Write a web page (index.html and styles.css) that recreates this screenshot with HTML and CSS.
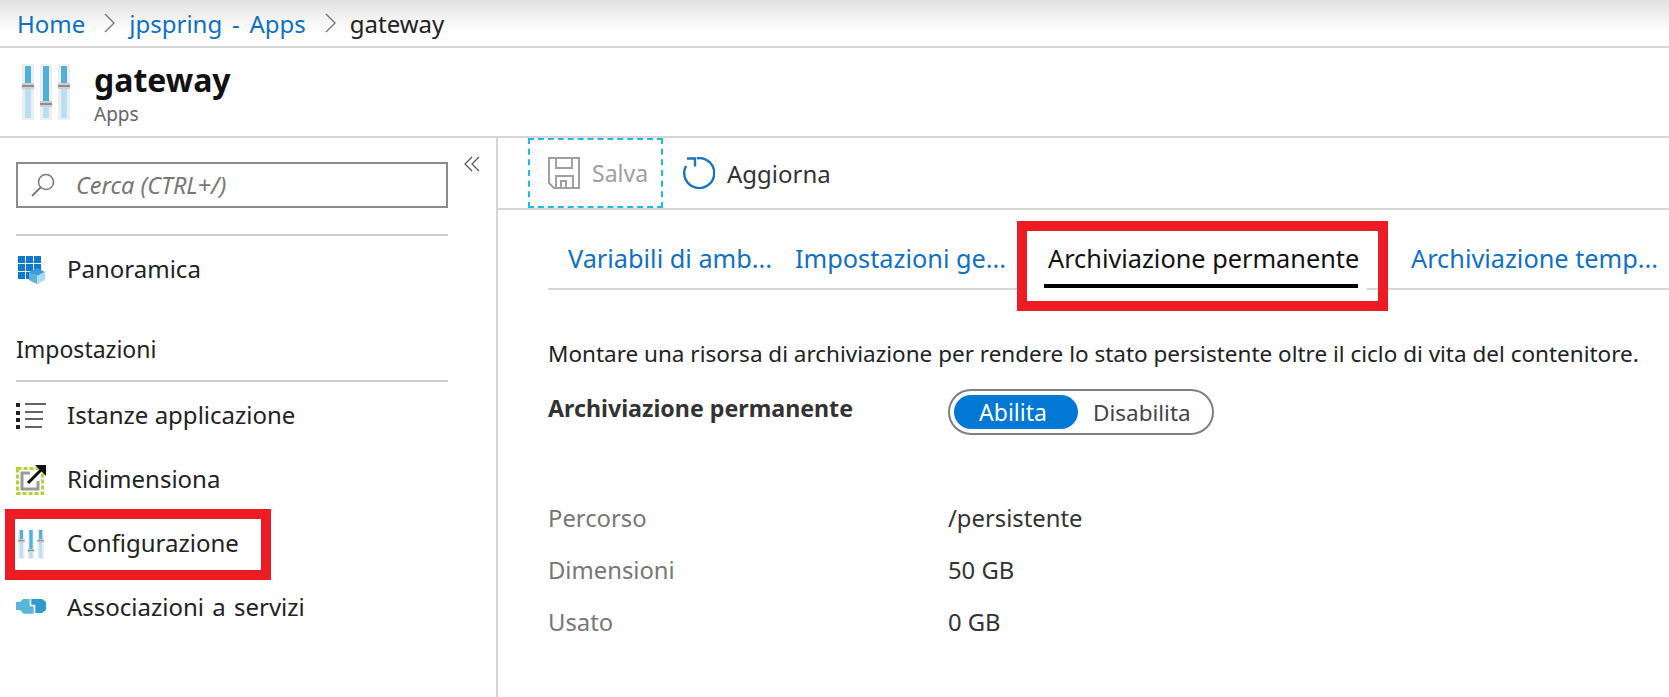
FILE: index.html
```html
<!DOCTYPE html>
<html lang="it">
<head>
  <meta charset="UTF-8">
  <title>gateway - Configurazione</title>
  <link rel="stylesheet" href="styles.css">
</head>
<body>

  <svg class="defs" width="0" height="0">
    <symbol id="sliders" viewBox="0 0 48 56">
      <rect x="0" y="0" width="12" height="56" fill="#eeeeee"/>
      <rect x="18" y="0" width="12" height="56" fill="#eeeeee"/>
      <rect x="36" y="0" width="12" height="56" fill="#eeeeee"/>
      <rect x="3" y="2" width="6" height="52" fill="#b9e0f2"/>
      <rect x="21" y="2" width="6" height="52" fill="#b9e0f2"/>
      <rect x="39" y="2" width="6" height="52" fill="#b9e0f2"/>
      <rect x="3" y="2" width="6" height="18" fill="#4fb0dc"/>
      <rect x="21" y="2" width="6" height="36" fill="#4fb0dc"/>
      <rect x="39" y="2" width="6" height="18" fill="#4fb0dc"/>
      <rect x="0" y="19" width="12" height="6" fill="#cfcfcf"/>
      <rect x="18" y="37" width="12" height="6" fill="#cfcfcf"/>
      <rect x="36" y="19" width="12" height="6" fill="#cfcfcf"/>
      <rect x="0" y="21" width="12" height="2" fill="#8c8c8c"/>
      <rect x="18" y="39" width="12" height="2" fill="#8c8c8c"/>
      <rect x="36" y="21" width="12" height="2" fill="#8c8c8c"/>
    </symbol>
  </svg>

  <nav class="breadcrumb">
    <a href="#">Home</a>
    <svg class="crumb-sep" width="12" height="20" viewBox="0 0 12 20"><path d="M1 1l9 9-9 9" fill="none" stroke="#777" stroke-width="1.4"/></svg>
    <a href="#" class="crumb-wide">jpspring - Apps</a>
    <svg class="crumb-sep" width="12" height="20" viewBox="0 0 12 20"><path d="M1 1l9 9-9 9" fill="none" stroke="#777" stroke-width="1.4"/></svg>
    <span>gateway</span>
  </nav>

  <header class="page-header">
    <svg class="header-icon" width="48" height="56"><use href="#sliders"/></svg>
    <div class="header-text">
      <h1>gateway</h1>
      <div class="subtitle">Apps</div>
    </div>
  </header>

  <div class="layout">
    <aside class="sidebar">
      <div class="search-row">
        <div class="search">
          <svg width="26" height="26" viewBox="0 0 26 26"><circle cx="16" cy="10" r="7.5" fill="none" stroke="#777" stroke-width="1.5"/><path d="M10.5 15.5L2 24" fill="none" stroke="#777" stroke-width="1.8"/></svg>
          <span>Cerca (CTRL+/)</span>
        </div>
        <svg class="collapse" width="16" height="16" viewBox="0 0 16 16"><path d="M8 1L1 8l7 7M15 1L8 8l7 7" fill="none" stroke="#555" stroke-width="1.2"/></svg>
      </div>

      <ul class="menu menu-top">
        <li>
          <svg class="menu-icon" width="30" height="30" viewBox="0 0 30 30">
            <path d="M2 1h7v7H2zM10 1h7v7h-7zM18 1h7v7h-7zM2 9h7v7H2zM10 9h7v7h-7zM18 9h7v7h-7zM2 17h7v7H2zM10 17h7v7h-7z" fill="#0f78d0"/>
            <path d="M21 13l8 4-8 4-8-4z" fill="#3f9bd8"/>
            <path d="M13 17l8 4v8l-8-4z" fill="#59b4d9"/>
            <path d="M29 17l-8 4v8l8-4z" fill="#a9dbf1"/>
          </svg>
          Panoramica
        </li>
      </ul>

      <h2 class="menu-title">Impostazioni</h2>

      <ul class="menu">
        <li>
          <svg class="menu-icon" width="30" height="30" viewBox="0 0 30 30">
            <path d="M0 2h4v4H0zM0 10h4v4H0zM0 17h4v4H0zM0 24h4v4H0z" fill="#222"/>
            <path d="M9 3h21M9 11h18M9 18h18M9 26h17" stroke="#333" stroke-width="1.5" fill="none"/>
          </svg>
          Istanze applicazione
        </li>
        <li>
          <svg class="menu-icon" width="30" height="30" viewBox="0 0 30 30">
            <rect x="1.5" y="3.5" width="25" height="25" fill="none" stroke="#b4d234" stroke-width="3" stroke-dasharray="4 2"/>
            <path d="M14 8H6v16h16v-8" fill="none" stroke="#9a9a9a" stroke-width="3"/>
            <path d="M12 18L27 3" stroke="#111" stroke-width="3"/>
            <path d="M19 0h11v11z" fill="#111"/>
          </svg>
          Ridimensiona
        </li>
        <li class="marked">
          <svg class="menu-icon" width="27" height="30"><use href="#sliders"/></svg>
          Configurazione
          <span class="red-box red-box-menu"></span>
        </li>
        <li class="wide-words">
          <svg class="menu-icon" width="30" height="30" viewBox="0 -5 30 30">
            <path d="M0 4h4l3-3h6.7v7.3h4v7.4H7.7L4 12H0z" fill="#59b4d9"/>
            <path d="M15.3 1H26l4 3v8l-4 3h-6.7V6.7h-4z" fill="#3299cc"/>
          </svg>
          Associazioni a servizi
        </li>
      </ul>
    </aside>

    <main class="content">
      <div class="toolbar">
        <button class="tool tool-save">
          <svg width="32" height="32" viewBox="0 0 32 32"><path d="M1 1h30v30H6l-5-5z M8 1v10h16V1 M8 31V19h17v12 M13 31v-7h5v7" fill="none" stroke="#a0a0a0" stroke-width="2"/></svg>
          Salva
        </button>
        <button class="tool">
          <svg width="32" height="32" viewBox="0 0 32 32"><path d="M14 1.2A15 15 0 1 1 3 9" fill="none" stroke="#1a75bc" stroke-width="2.4"/><path d="M4 1.5h8v8" fill="none" stroke="#1a75bc" stroke-width="2.4"/></svg>
          Aggiorna
        </button>
      </div>

      <div class="tabs">
        <a href="#" class="tab tab-env">Variabili di amb...</a>
        <a href="#" class="tab tab-general">Impostazioni ge...</a>
        <a href="#" class="tab tab-active">Archiviazione permanente<span class="red-box red-box-tab"></span></a>
        <a href="#" class="tab">Archiviazione temp...</a>
      </div>

      <div class="panel">
        <p class="intro">Montare una risorsa di archiviazione per rendere lo stato persistente oltre il ciclo di vita del contenitore.</p>

        <div class="form-row">
          <label>Archiviazione permanente</label>
          <div class="toggle">
            <span class="toggle-on">Abilita</span>
            <span class="toggle-off">Disabilita</span>
          </div>
        </div>

        <dl class="details">
          <dt>Percorso</dt><dd>/persistente</dd>
          <dt>Dimensioni</dt><dd>50 GB</dd>
          <dt>Usato</dt><dd>0 GB</dd>
        </dl>
      </div>
    </main>
  </div>

</body>
</html>
```

FILE: styles.css
```css
body {
  margin: 0;
  height: 697px;
  overflow: hidden;
  background: #fff;
  color: #222;
  font-family: "Noto Sans", "Open Sans", sans-serif;
  font-size: 23px;
}

a {
  color: #0f70c7;
  text-decoration: none;
}

.defs {
  position: absolute;
}

.breadcrumb {
  height: 46px;
  display: flex;
  align-items: center;
  padding-left: 17px;
  border-bottom: 2px solid #d6d6d6;
  background: linear-gradient(#e2e2e2, #fff 70%);
  font-size: 24px;
}

.crumb-sep {
  margin: 0 13px 0 19px;
}

.crumb-wide {
  word-spacing: 3.5px;
}

.page-header {
  height: 88px;
  display: flex;
  align-items: center;
  padding-left: 22px;
  gap: 24px;
  border-bottom: 2px solid #d6d6d6;
}

.header-text {
  padding-top: 4px;
}

.page-header h1 {
  margin: 0;
  font-size: 32px;
  line-height: 38px;
  color: #111;
}

.subtitle {
  margin-top: 2px;
  font-size: 19px;
  line-height: 26px;
  color: #666;
}

.layout {
  display: flex;
  height: 559px;
}

.sidebar {
  width: 498px;
  flex: none;
  box-sizing: border-box;
  padding: 0 48px 0 16px;
  border-right: 2px solid #d6d6d6;
}

.search-row {
  position: relative;
  padding-top: 24px;
}

.search {
  height: 46px;
  box-sizing: border-box;
  display: flex;
  align-items: center;
  gap: 20px;
  padding-left: 12px;
  border: 2px solid #8c8c8c;
  color: #777;
  font-style: italic;
  font-size: 23.5px;
}

.collapse {
  position: absolute;
  top: 18px;
  right: -32px;
}

.menu {
  list-style: none;
  margin: 0;
  padding: 0;
  font-size: 24px;
}

.menu li {
  position: relative;
  height: 64px;
  display: flex;
  align-items: center;
  padding-bottom: 3px;
  box-sizing: border-box;
}

.menu .wide-words {
  word-spacing: 2px;
}

.menu-top {
  margin-top: 26px;
  padding-top: 2px;
  border-top: 2px solid #ccc;
}

.menu-icon {
  flex: none;
  width: 30px;
  margin-right: 21px;
  margin-top: 3px;
}

.menu-title {
  margin: 0 0 2px;
  padding: 30px 0 14px;
  border-bottom: 2px solid #ccc;
  font-size: 23px;
  font-weight: normal;
  line-height: 34px;
}

.red-box {
  position: absolute;
  box-sizing: border-box;
  border: 10px solid #ed1c24;
  pointer-events: none;
}

.red-box-menu {
  left: -11px;
  top: -3px;
  width: 266px;
  height: 71px;
}

.content {
  flex: 1;
  min-width: 0;
}

.toolbar {
  height: 70px;
  display: flex;
  padding-left: 30px;
  border-bottom: 2px solid #d6d6d6;
}

.tool {
  display: flex;
  align-items: center;
  gap: 12px;
  padding: 0 20px;
  border: none;
  background: none;
  color: #333;
  font-family: inherit;
  font-size: 24px;
}

.tool-save {
  width: 135px;
  padding: 0 0 0 18px;
  border: 2px dashed #1dbbe6;
  color: #a0a0a0;
  font-size: 23px;
}

.tabs {
  height: 78px;
  display: flex;
  margin-left: 50px;
  border-bottom: 2px solid #d6d6d6;
  font-size: 25.3px;
}

.tab {
  position: relative;
  display: flex;
  align-items: center;
  height: 78px;
  box-sizing: border-box;
  padding-top: 18px;
  white-space: nowrap;
}

.tab-env {
  margin-left: 20px;
  width: 227px;
}

.tab-general {
  width: 253px;
}

.tab-active {
  width: 363px;
  color: #111;
}

.tab-active::before {
  content: "";
  position: absolute;
  left: -21px;
  width: 340px;
  bottom: -2px;
  height: 2px;
  background: #fff;
}

.tab-active::after {
  content: "";
  position: absolute;
  left: -4px;
  width: 314px;
  bottom: 0;
  height: 4px;
  background: #000;
}

.red-box-tab {
  left: -31px;
  top: 11px;
  width: 371px;
  height: 90px;
}

.panel {
  padding-left: 50px;
}

.intro {
  margin: 46px 0 0;
  font-size: 22.5px;
  line-height: 36px;
  white-space: nowrap;
  color: #222;
}

.form-row {
  display: flex;
  margin-top: 17px;
  height: 46px;
}

.form-row label {
  width: 400px;
  font-weight: bold;
  font-size: 23.2px;
  line-height: 38px;
  color: #333;
}

.toggle {
  width: 266px;
  height: 46px;
  box-sizing: border-box;
  display: flex;
  align-items: center;
  padding-left: 4px;
  border: 2px solid #808080;
  border-radius: 23px;
}

.toggle-on {
  width: 124px;
  height: 34px;
  box-sizing: border-box;
  display: flex;
  align-items: center;
  justify-content: center;
  padding-right: 6px;
  border-radius: 17px;
  background: #0078d4;
  color: #fff;
}

.toggle-off {
  margin-left: 15px;
  font-size: 22.5px;
  color: #444;
}

.details {
  display: grid;
  grid-template-columns: 400px 1fr;
  grid-auto-rows: 52px;
  align-items: center;
  margin: 57px 0 0;
  font-size: 23.8px;
}

.details dt {
  color: #777;
}

.details dd {
  margin: 0;
  color: #333;
}
```
